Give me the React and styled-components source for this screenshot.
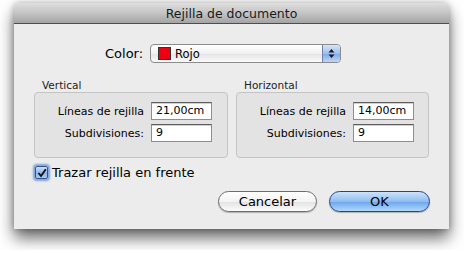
import React from 'react'
import styled, { createGlobalStyle } from 'styled-components'

const Global = createGlobalStyle`
  html, body {
    margin: 0;
    background: #fff;
    font-family: "DejaVu Sans", "Liberation Sans", sans-serif;
    color: #000;
  }
  * {
    box-sizing: border-box;
  }
`

const Page = styled.div`
  padding: 3px 0 0 14px;
  height: 250px;
`

const Window = styled.div`
  width: 435px;
  height: 226px;
  background: #ececec;
  border-radius: 5px 5px 0 0;
  box-shadow: 0 9px 16px rgba(0, 0, 0, 0.6), 0 0 6px rgba(0, 0, 0, 0.25);
  display: flex;
  flex-direction: column;
  overflow: hidden;
`

const TitleBar = styled.div`
  height: 21px;
  border-bottom: 1px solid #4d4d4d;
  background: linear-gradient(#dedede, #c4c4c4 50%, #a4a4a4);
  display: flex;
  align-items: center;
  justify-content: center;
  font-size: 12.5px;
  color: #1a1a1a;
  padding-top: 1px;
`

const Body = styled.div`
  display: flex;
  flex-direction: column;
  padding: 20px 19px 0 20px;
`

const ColorRow = styled.div`
  display: flex;
  align-items: center;
  padding-left: 71px;
  gap: 7px;
  font-size: 13px;
`

const Popup = styled.div`
  width: 191px;
  height: 19px;
  border: 1px solid #8b8b8b;
  border-radius: 4px;
  background: linear-gradient(#ffffff, #f1f1f1 50%, #e4e4e4 51%, #fafafa);
  display: flex;
  align-items: center;
  overflow: hidden;
  font-size: 11.5px;
`

const Swatch = styled.span`
  width: 13px;
  height: 13px;
  background: ${p => p.color};
  border: 1px solid #333;
  margin: 0 4px 0 7px;
`

const PopupText = styled.span`
  flex: 1;
`

const Arrows = styled.div`
  width: 18px;
  height: 100%;
  border-left: 1px solid #6f7fb0;
  background: linear-gradient(#d6e5f8, #9cc0ed 50%, #7fa9e6 51%, #bcd6f6);
  display: flex;
  align-items: center;
  justify-content: center;
`

const Groups = styled.div`
  display: flex;
  gap: 8px;
  margin-top: 15px;
`

const Group = styled.div`
  width: ${p => p.w}px;
  display: flex;
  flex-direction: column;
`

const GroupLabel = styled.div`
  font-size: 10.5px;
  color: #222;
  padding-left: 8px;
  height: 14px;
  line-height: 14px;
`

const GroupBox = styled.div`
  height: 66px;
  border: 1px solid #c4c4c4;
  border-radius: 4px;
  background: #e3e3e3;
  display: grid;
  grid-template-columns: 109px 61px;
  column-gap: 7px;
  row-gap: 4px;
  align-content: start;
  padding-top: 9px;
`

const FieldLabel = styled.div`
  font-size: 11px;
  text-align: right;
  align-self: center;
  white-space: nowrap;
`

const Field = styled.div`
  height: 18px;
  border: 1px solid #8e8e8e;
  border-top-color: #5e5e5e;
  background: #fff;
  font-size: 11px;
  line-height: 16px;
  padding-left: 4px;
  box-shadow: inset 0 1px 0 #d0d0d0;
`

const CheckRow = styled.label`
  display: flex;
  align-items: center;
  margin-top: 7px;
  font-size: 13px;
  gap: 4px;
  padding-left: 1px;
`

const Check = styled.span`
  width: 13px;
  height: 13px;
  border: 1px solid #33558f;
  border-radius: 2px;
  background: linear-gradient(#cfe0f7, #8db4ea 55%, #a9c8f0);
  box-shadow: 0 0 2px 2px rgba(90, 140, 215, 0.75);
  display: flex;
  align-items: center;
  justify-content: center;
`

const Buttons = styled.div`
  display: flex;
  justify-content: flex-end;
  gap: 12px;
  margin-top: 11px;
`

const Button = styled.div`
  width: ${p => p.w}px;
  height: 21px;
  border-radius: 11px;
  border: 1px solid ${p => (p.primary ? '#27418a' : '#6d6d6d')};
  background: ${p =>
    p.primary
      ? 'linear-gradient(#cde2fb, #8fbdf0 50%, #6aa5ec 51%, #b0d8fb)'
      : 'linear-gradient(#ffffff, #f3f3f3 50%, #e2e2e2 51%, #fbfbfb)'};
  display: flex;
  align-items: center;
  justify-content: center;
  font-size: 13px;
  box-shadow: 0 1px 1px rgba(0, 0, 0, 0.25);
`

const GridPanel = ({ title, w, lines }) => (
  <Group w={w}>
    <GroupLabel>{title}</GroupLabel>
    <GroupBox>
      <FieldLabel>Líneas de rejilla</FieldLabel>
      <Field>{lines}</Field>
      <FieldLabel>Subdivisiones:</FieldLabel>
      <Field>9</Field>
    </GroupBox>
  </Group>
)

export default function App() {
  return (
    <Page>
      <Global />
      <Window>
        <TitleBar>Rejilla de documento</TitleBar>
        <Body>
          <ColorRow>
            <span>Color:</span>
            <Popup>
              <Swatch color="#ee0010" />
              <PopupText>Rojo</PopupText>
              <Arrows>
                <svg width="7" height="11" viewBox="0 0 7 11">
                  <path d="M3.5 1 L6.5 4.5 L0.5 4.5 Z M3.5 10 L6.5 6.5 L0.5 6.5 Z" fill="#1a1a2a" />
                </svg>
              </Arrows>
            </Popup>
          </ColorRow>
          <Groups>
            <GridPanel title="Vertical" w={194} lines="21,00cm" />
            <GridPanel title="Horizontal" w={193} lines="14,00cm" />
          </Groups>
          <CheckRow>
            <Check>
              <svg width="10" height="10" viewBox="0 0 10 10">
                <path d="M1.5 5 L4 8 L8.8 1.2" stroke="#111" strokeWidth="1.8" fill="none" />
              </svg>
            </Check>
            Trazar rejilla en frente
          </CheckRow>
          <Buttons>
            <Button w={99}>Cancelar</Button>
            <Button w={101} primary>OK</Button>
          </Buttons>
        </Body>
      </Window>
    </Page>
  )
}
